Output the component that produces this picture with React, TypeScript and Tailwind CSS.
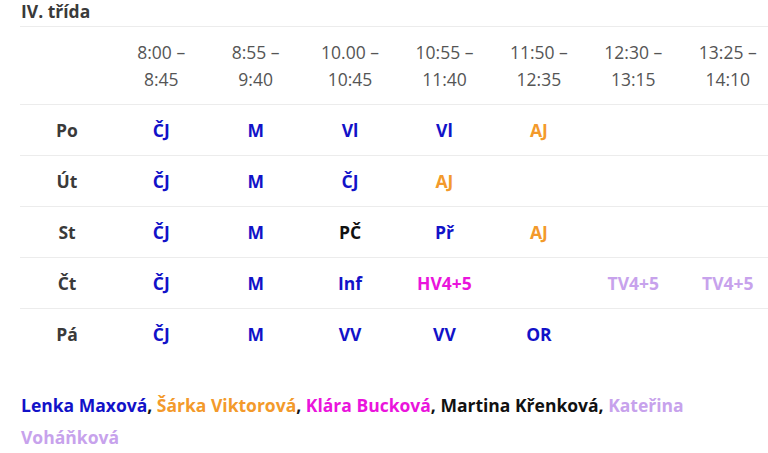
const times = [
  ['8:00 –', '8:45'],
  ['8:55 –', '9:40'],
  ['10.00 –', '10:45'],
  ['10:55 –', '11:40'],
  ['11:50 –', '12:35'],
  ['12:30 –', '13:15'],
  ['13:25 –', '14:10'],
];

const C = {
  blue: 'text-[#1212c8]',
  orange: 'text-[#f39a2b]',
  pink: 'text-[#ea14dc]',
  black: 'text-[#111111]',
  lilac: 'text-[#c7a2ec]',
};

type Cell = [string, string] | null;

const rows: { day: string; cells: Cell[] }[] = [
  { day: 'Po', cells: [['ČJ', C.blue], ['M', C.blue], ['Vl', C.blue], ['Vl', C.blue], ['AJ', C.orange], null, null] },
  { day: 'Út', cells: [['ČJ', C.blue], ['M', C.blue], ['ČJ', C.blue], ['AJ', C.orange], null, null, null] },
  { day: 'St', cells: [['ČJ', C.blue], ['M', C.blue], ['PČ', C.black], ['Př', C.blue], ['AJ', C.orange], null, null] },
  { day: 'Čt', cells: [['ČJ', C.blue], ['M', C.blue], ['Inf', C.blue], ['HV4+5', C.pink], null, ['TV4+5', C.lilac], ['TV4+5', C.lilac]] },
  { day: 'Pá', cells: [['ČJ', C.blue], ['M', C.blue], ['VV', C.blue], ['VV', C.blue], ['OR', C.blue], null, null] },
];

export default function App() {
  return (
    <div className="w-[768px] h-[453px] overflow-hidden bg-white font-['Open_Sans',sans-serif] text-[17.5px] text-[#333]">
      <div className="pl-[21px] -mt-[2px]">
        <h3 className="text-[17.5px] font-bold leading-[27px] text-[#3a3a3a]">IV. třída</h3>
      </div>
      <table className="ml-[20px] mt-[1px] w-[755px] table-fixed border-collapse">
        <thead>
          <tr className="border-t border-b border-[#ececec]">
            <th className="w-[94px]"></th>
            {times.map((t, i) => (
              <th key={i} className="py-[11.5px] text-center font-normal leading-[27px] text-[#555]">
                {t[0]}
                <br />
                {t[1]}
              </th>
            ))}
          </tr>
        </thead>
        <tbody>
          {rows.map((r, ri) => (
            <tr key={r.day} className={ri < rows.length - 1 ? 'border-b border-[#ececec]' : ''}>
              <td className="py-[11.5px] text-center font-bold leading-[27px] text-[#3a3a3a]">{r.day}</td>
              {r.cells.map((c, ci) => (
                <td key={ci} className={`py-[11.5px] text-center font-bold leading-[27px] ${c ? c[1] : ''}`}>
                  {c ? c[0] : ''}
                </td>
              ))}
            </tr>
          ))}
        </tbody>
      </table>
      <p className="mt-[30px] pl-[21px] font-bold leading-[32px] text-[#111]">
        <span className={C.blue}>Lenka Maxová</span>, <span className={C.orange}>Šárka Viktorová</span>,{' '}
        <span className={C.pink}>Klára Bucková</span>, <span className={C.black}>Martina Křenková</span>,{' '}
        <span className={C.lilac}>Kateřina Voháňková</span>
      </p>
    </div>
  );
}
